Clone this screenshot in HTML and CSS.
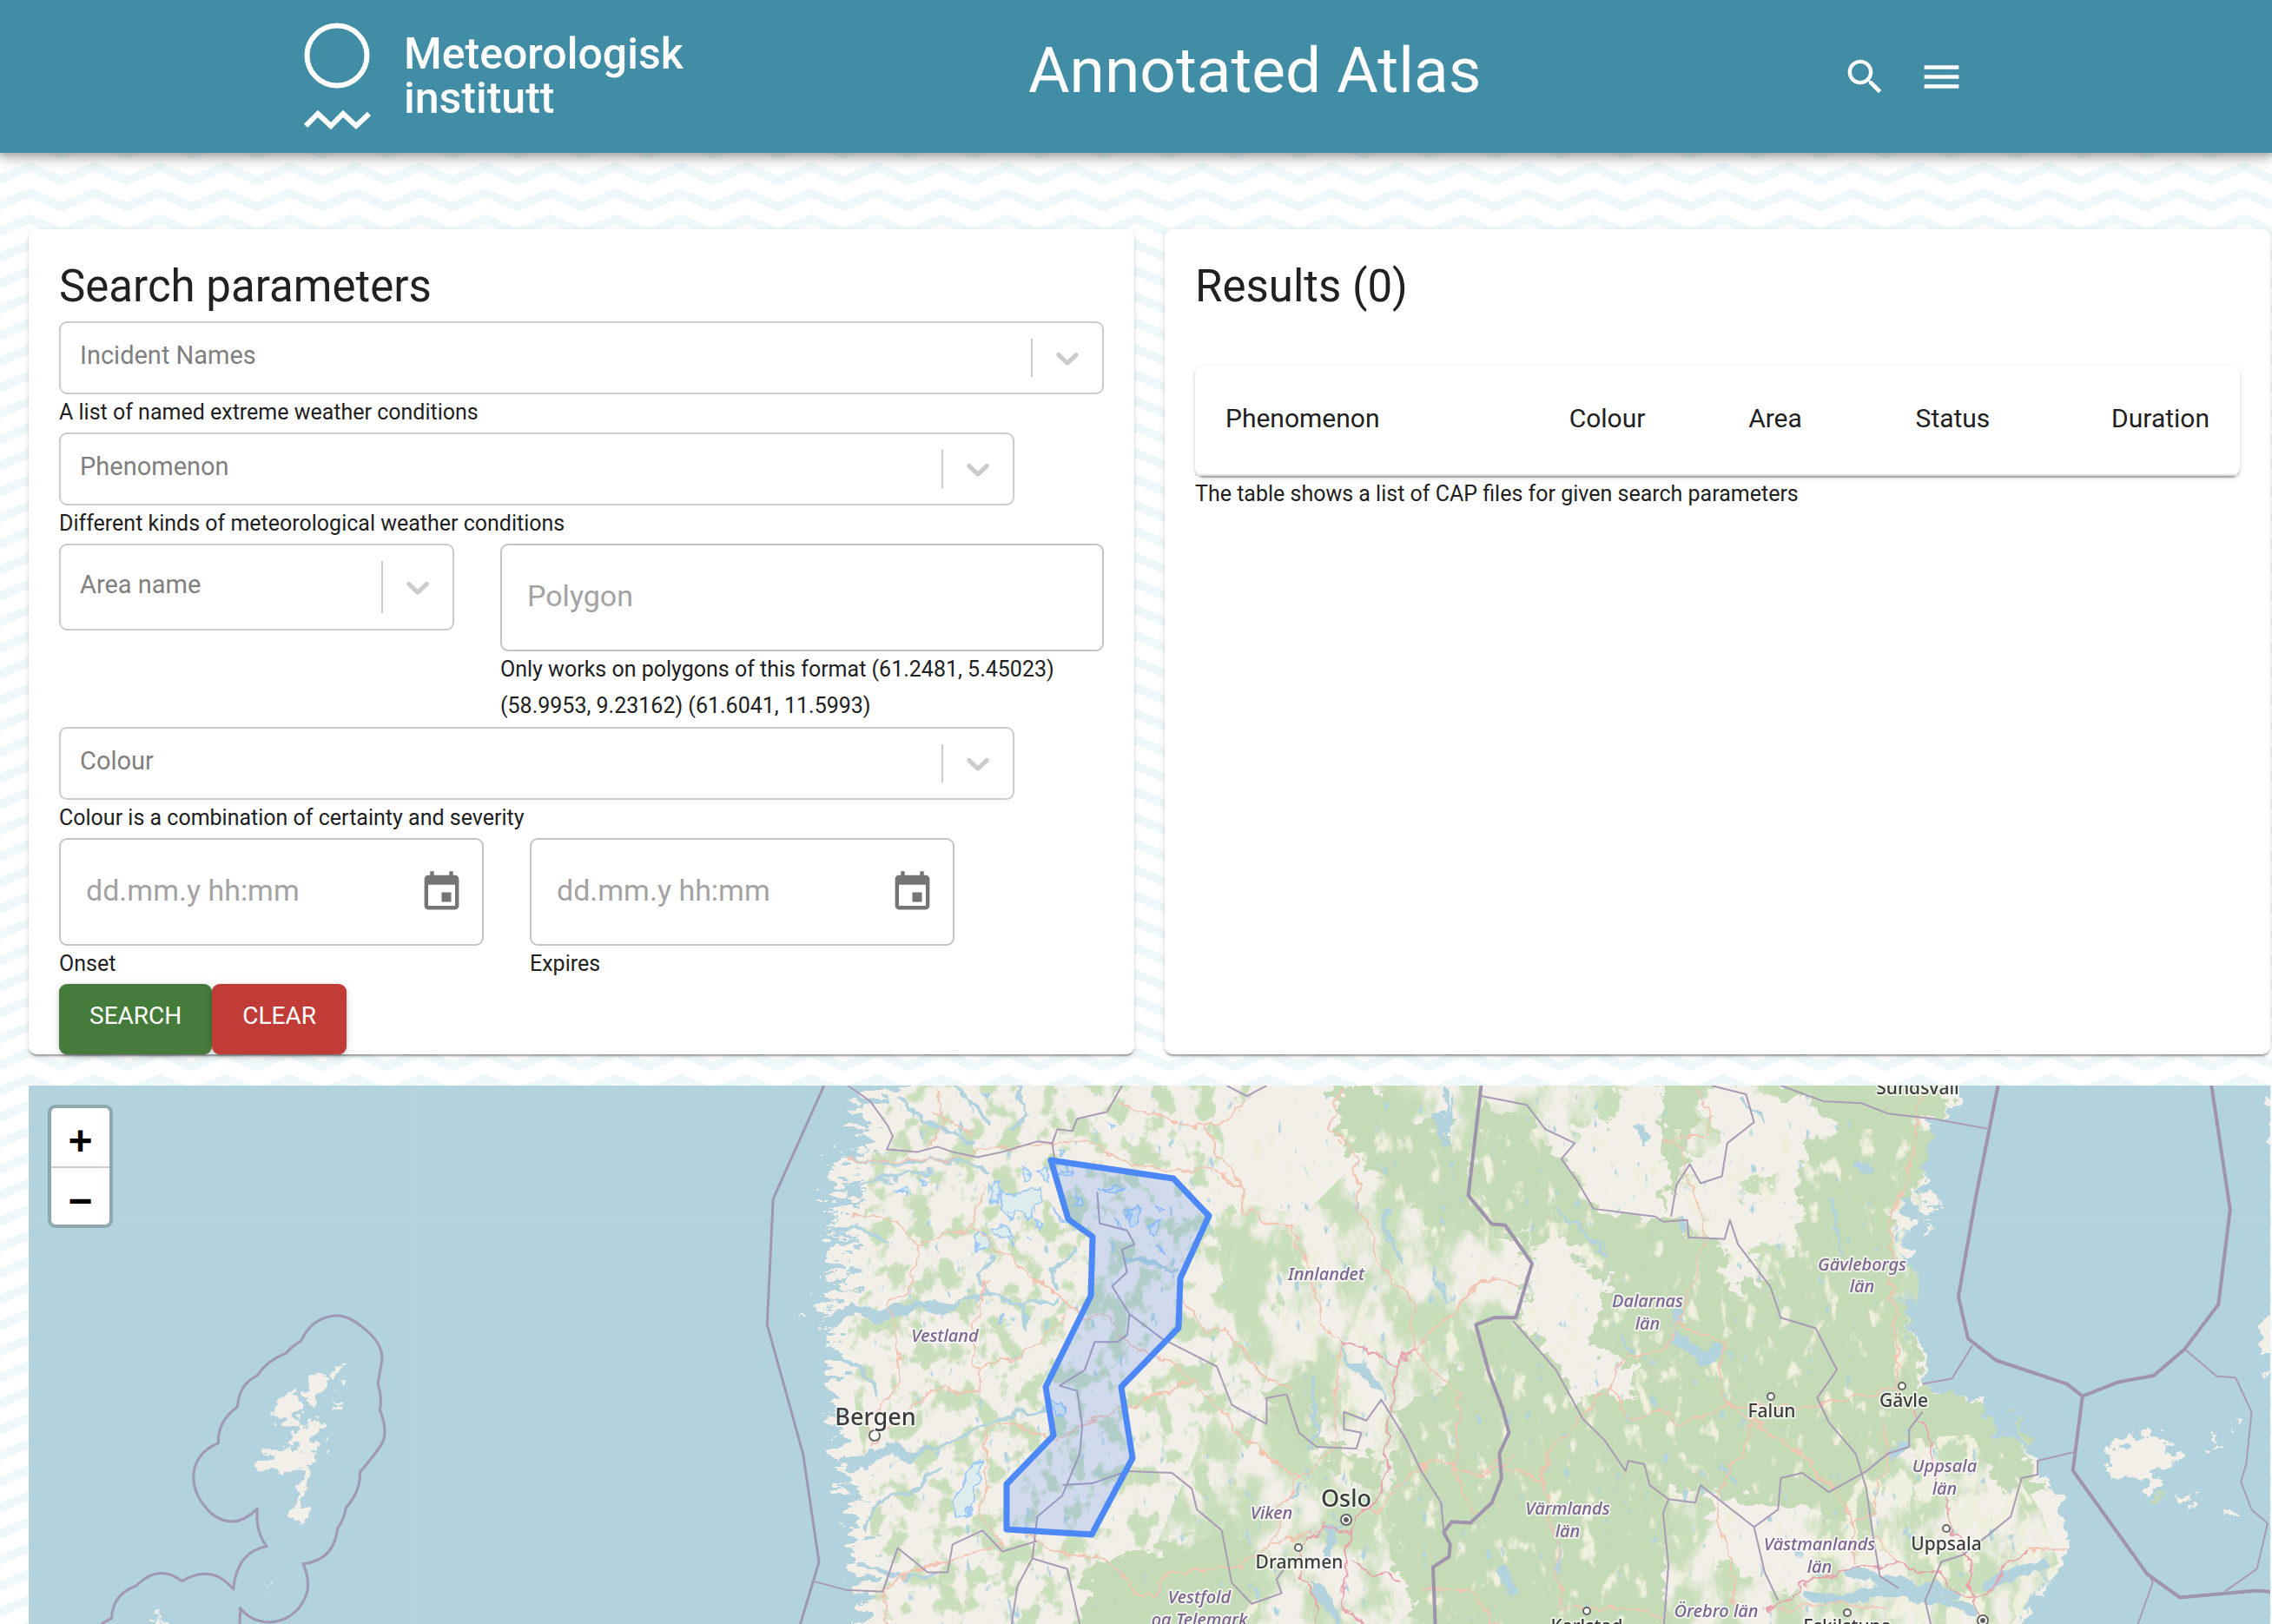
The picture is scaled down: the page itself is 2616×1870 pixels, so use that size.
FILE: index.html
```html
<!DOCTYPE html>
<html lang="en">
<head>
<meta charset="utf-8">
<meta name="viewport" content="width=device-width, initial-scale=1">
<title>Annotated Atlas</title>
<link rel="stylesheet" href="styles.css">
</head>
<body>
<header class="app-bar">
  <a class="logo" href="#" aria-label="Meteorologisk institutt">
    <svg class="logo-mark" viewBox="0 0 78 124" aria-hidden="true">
      <circle cx="38" cy="38" r="34.5"/>
      <path d="M2 119 16 105 31 119 45 105 60 119 75 105"/>
    </svg>
    <span class="logo-text">Meteorologisk<br>institutt</span>
  </a>
  <h1 class="app-title">Annotated Atlas</h1>
  <nav class="app-actions">
    <button class="icon-button" type="button" aria-label="Search">
      <svg viewBox="0 0 24 24"><path d="M15.5 14h-.79l-.28-.27C15.41 12.59 16 11.11 16 9.5 16 5.91 13.09 3 9.5 3S3 5.91 3 9.5 5.91 16 9.5 16c1.61 0 3.09-.59 4.23-1.57l.27.28v.79l5 4.99L20.49 19l-4.99-5zm-6 0C7.01 14 5 11.99 5 9.5S7.01 5 9.5 5 14 7.01 14 9.5 11.99 14 9.5 14z"/></svg>
    </button>
    <button class="icon-button" type="button" aria-label="Menu">
      <svg viewBox="0 0 24 24"><path d="M3 18h18v-2H3v2zm0-5h18v-2H3v2zm0-7v2h18V6H3z"/></svg>
    </button>
  </nav>
</header>

<main class="page">
  <div class="panels">
    <section class="card">
      <h2 class="card-title">Search parameters</h2>
      <form class="search-form">
        <div class="field">
          <div class="select">
            <select id="incident" aria-label="Incident Names"><option>Incident Names</option></select>
            <span class="select-arrow"><svg viewBox="0 0 20 20"><use href="#chevron"/></svg></span>
          </div>
          <label class="help" for="incident">A list of named extreme weather conditions</label>
        </div>
        <div class="field field-short">
          <div class="select">
            <select id="phenomenon" aria-label="Phenomenon"><option>Phenomenon</option></select>
            <span class="select-arrow"><svg viewBox="0 0 20 20"><use href="#chevron"/></svg></span>
          </div>
          <label class="help" for="phenomenon">Different kinds of meteorological weather conditions</label>
        </div>
        <div class="area-row">
          <div class="select select-tall">
            <select aria-label="Area name"><option>Area name</option></select>
            <span class="select-arrow"><svg viewBox="0 0 20 20"><use href="#chevron"/></svg></span>
          </div>
          <div class="field">
            <div class="text-box"><input id="polygon" type="text" placeholder="Polygon"></div>
            <label class="help" for="polygon">Only works on polygons of this format (61.2481, 5.45023) (58.9953, 9.23162) (61.6041, 11.5993)</label>
          </div>
        </div>
        <div class="field field-short">
          <div class="select">
            <select id="colour" aria-label="Colour"><option>Colour</option></select>
            <span class="select-arrow"><svg viewBox="0 0 20 20"><use href="#chevron"/></svg></span>
          </div>
          <label class="help" for="colour">Colour is a combination of certainty and severity</label>
        </div>
        <div class="date-row">
          <div class="field">
            <div class="text-box">
              <input id="onset" type="text" placeholder="dd.mm.y hh:mm">
              <button class="icon-button calendar" type="button" aria-label="Choose onset"><svg viewBox="0 0 24 24"><use href="#event"/></svg></button>
            </div>
            <label class="help" for="onset">Onset</label>
          </div>
          <div class="field">
            <div class="text-box">
              <input id="expires" type="text" placeholder="dd.mm.y hh:mm">
              <button class="icon-button calendar" type="button" aria-label="Choose expiry"><svg viewBox="0 0 24 24"><use href="#event"/></svg></button>
            </div>
            <label class="help" for="expires">Expires</label>
          </div>
        </div>
        <div class="buttons">
          <button class="button button-search" type="submit">SEARCH</button>
          <button class="button button-clear" type="reset">CLEAR</button>
        </div>
      </form>
    </section>

    <section class="card">
      <h2 class="card-title">Results (0)</h2>
      <div class="table-paper">
        <table class="results">
          <thead>
            <tr><th scope="col">Phenomenon</th><th scope="col">Colour</th><th scope="col">Area</th><th scope="col">Status</th><th scope="col">Duration</th></tr>
          </thead>
        </table>
      </div>
      <p class="help">The table shows a list of CAP files for given search parameters</p>
    </section>
  </div>

  <section class="map" aria-label="Map">
    <svg class="map-canvas" viewBox="33 1250 2581 640" preserveAspectRatio="xMinYMin slice">
      <defs>
        <filter id="rough" filterUnits="userSpaceOnUse" x="33" y="1230" width="2600" height="680" color-interpolation-filters="sRGB">
          <feTurbulence type="fractalNoise" baseFrequency=".045 .06" numOctaves="4" seed="4" result="n"/>
          <feDisplacementMap in="SourceGraphic" in2="n" scale="46" xChannelSelector="R" yChannelSelector="G"/>
        </filter>
        <filter id="coast" filterUnits="userSpaceOnUse" x="33" y="1230" width="2600" height="680" color-interpolation-filters="sRGB">
          <feTurbulence type="fractalNoise" baseFrequency=".04 .09" numOctaves="5" seed="15" result="n"/>
          <feDisplacementMap in="SourceGraphic" in2="n" scale="90" xChannelSelector="R" yChannelSelector="G"/>
        </filter>
        <filter id="wobble" filterUnits="userSpaceOnUse" x="33" y="1230" width="2600" height="680" color-interpolation-filters="sRGB">
          <feTurbulence type="fractalNoise" baseFrequency=".05" numOctaves="3" seed="9" result="n"/>
          <feDisplacementMap in="SourceGraphic" in2="n" scale="18" xChannelSelector="R" yChannelSelector="G"/>
        </filter>
        <filter id="sparse-green" filterUnits="userSpaceOnUse" x="33" y="1230" width="2600" height="680" color-interpolation-filters="sRGB">
          <feTurbulence type="fractalNoise" baseFrequency=".04 .035" numOctaves="5" seed="12"/>
          <feColorMatrix values="0 0 0 0 .79  0 0 0 0 .87  0 0 0 0 .73  9 0 0 0 -4.6"/>
          <feComposite in2="SourceAlpha" operator="in"/>
        </filter>
        <filter id="dense-green" filterUnits="userSpaceOnUse" x="33" y="1230" width="2600" height="680" color-interpolation-filters="sRGB">
          <feTurbulence type="fractalNoise" baseFrequency=".022 .014" numOctaves="5" seed="31"/>
          <feColorMatrix values="0 0 0 0 .79  0 0 0 0 .87  0 0 0 0 .73  6 0 0 0 -2.5"/>
          <feComposite in2="SourceAlpha" operator="in"/>
        </filter>
        <filter id="fields" filterUnits="userSpaceOnUse" x="33" y="1230" width="2600" height="680" color-interpolation-filters="sRGB">
          <feTurbulence type="fractalNoise" baseFrequency=".05 .03" numOctaves="4" seed="7"/>
          <feColorMatrix values="0 0 0 0 .94  0 0 0 0 .94  0 0 0 0 .87  0 9 0 0 -4.7"/>
          <feComposite in2="SourceAlpha" operator="in"/>
        </filter>
        <filter id="clearings" filterUnits="userSpaceOnUse" x="33" y="1230" width="2600" height="680" color-interpolation-filters="sRGB">
          <feTurbulence type="fractalNoise" baseFrequency=".05 .03" numOctaves="4" seed="17"/>
          <feColorMatrix values="0 0 0 0 .94  0 0 0 0 .94  0 0 0 0 .87  0 7 0 0 -4.3"/>
          <feComposite in2="SourceAlpha" operator="in"/>
        </filter>
        <filter id="lakes" filterUnits="userSpaceOnUse" x="33" y="1230" width="2600" height="680" color-interpolation-filters="sRGB">
          <feTurbulence type="fractalNoise" baseFrequency=".09 .045" numOctaves="3" seed="21"/>
          <feColorMatrix values="0 0 0 0 .7  0 0 0 0 .83  0 0 0 0 .87  0 0 10 0 -7.2"/>
          <feComposite in2="SourceAlpha" operator="in"/>
        </filter>
      </defs>
      <rect class="sea" x="33" y="1230" width="2600" height="680"/>
      <path class="tile-seam" d="M474 1250V1890M33 1401H2614"/>

      <!-- land -->
      <g filter="url(#coast)">
        <g transform="translate(846 1240) scale(.574 .4018)">
          <path class="land" d="M335-60 315 40 240 90 255 140 290 190 230 190 235 220 195 260 205 290 245 310 190 370 225 400 180 430 235 460 215 500 170 560 240 570 195 620 160 690 215 690 185 730 195 790 195 850 200 900 195 950 210 1010 215 1080 230 1130 235 1220 250 1280 240 1330 255 1380 250 1440 265 1500 250 1700H900V-60z"/>
        </g>
      </g>
      <g filter="url(#rough)">
        <g transform="translate(1650 1240) scale(.616 .4018)">
          <path class="land" d="M-900-40H990L975 90 935 120 925 180 915 260 915 310 935 350 925 395 885 340 870 350 885 400 880 480 890 560 880 640 885 700 898 770 910 850 915 890 950 895 965 940 1015 920 1030 970 1065 1030 1110 1080 1140 1130 1160 1200 1175 1260 1200 1310 1195 1360 1155 1400 1130 1440 1160 1450 1105 1500 1080 1700H-900z"/>
          <path class="land" d="M1310 1010 1350 1020 1385 1050 1390 1110 1360 1140 1330 1180 1300 1160 1270 1140 1260 1080 1295 1060zM1460 1050 1475 1040 1470 1085zM1390 1200 1440 1190 1410 1230zM1490 1240 1505 1255 1488 1270zM1565 700 1540 760 1575 850 1600 700zM1570 60 1562 180 1600 200 1600 40zM1500 970 1510 1000 1498 1010zM905 425 935 435 925 445z"/>
          <path class="green" d="M1080 960 1100 1010 1115 1070 1085 1040zM1350 1180 1380 1200 1350 1215z"/>
        </g>
        <g transform="translate(0 1450) scale(.574 .3333)">
          <path class="land" d="M675 335 692 345 688 370 680 432 662 425zM634 402 654 410 644 460 646 548 626 535 618 460zM664 460 692 480 680 502zM582 470 598 465 592 580 576 575 578 555 545 545 560 515zM610 550 640 590 635 660 625 690 626 760 615 770 612 850 602 928 588 905 600 800 604 710 580 735 570 752 535 700 532 660 580 655 590 590zM660 615 660 640 650 640zM325 1210 320 1245 300 1250zM405 1210 402 1235zM543 1110 545 1130 540 1132z"/>
        </g>
      </g>

      <!-- vegetation -->
      <path class="veg-sparse" d="M1035 1250 1010 1300 1000 1350 990 1450 975 1520 985 1620 1000 1720 1010 1890H1460L1430 1700 1480 1500 1400 1350 1440 1250z"/>
      <path class="veg-dense" d="M1280 1890 1340 1760 1390 1640 1430 1560 1400 1440 1410 1380 1500 1400 1570 1330 1540 1250H2190L2215 1300 2205 1600 2290 1650 2350 1740 2370 1800 2300 1890z"/>
      <g filter="url(#rough)">
        <g transform="translate(850 1240) scale(.574 .4018)">
          <path class="green" d="M1150 820 1200 900 1160 980 1190 1060 1280 1080 1290 1180 1240 1180 1180 1100 1100 1020 1060 900zM1330 960 1420 880 1480 720 1600 700V1700H1400L1330 1450 1300 1300 1320 1100zM700 1400 900 1330 1010 1280 1040 1500 1000 1700H680zM1190 30 1300 30 1460 200 1470 350 1560 460 1420 440 1300 300 1210 200z"/>
        </g>
        <g transform="translate(1650 1240) scale(.616 .4018)">
          <path class="green" d="M90 60 180 130 250 250 290 380 440 410 500 460 545 480 540 600 610 600 680 480 690 200 760 150 700 60 900 120 930 170 910 300 850 400 880 640 900 880 1010 930 1100 1080 1150 1180 1080 1200 1000 1060 900 1060 830 1140 820 1300 700 1250 600 1220 520 1180 430 1200 440 1700H60L20 1400 120 1200 140 1000 90 780 80 710 150 690 190 540 130 420 70 340z"/>
          <path class="green" d="M600-20 980-20 960 90 920 120 760 100 650 30zM430-20 510-20 500 60 470 240 432 400z"/>
          <path class="land" d="M365 25H430V400L300 378 280 300 240 230 275 140 330 115zM520 10 700 60 750 120 740 170 690 180 680 270 590 300 560 350 640 320 680 350 670 470 600 490 610 590 570 620 540 600 545 470 510 450 490 350 470 250 540 200 500 60zM130 400 200 470 250 450 290 550 330 580 300 700 305 790 370 800 365 930 330 880 290 930 240 860 160 700 200 480zM520 1190 600 1220 650 1240 690 1300 720 1400 660 1500 600 1420 520 1390z"/>
        </g>
      </g>
      <path class="veg-fields" d="M2080 1890 2090 1740 2150 1700 2160 1660 2290 1650 2360 1760 2370 1810 2300 1890z"/>
      <path class="veg-clearings" d="M1420 1890 1500 1700 1470 1500 1400 1300H2200L2200 1600 2150 1700 2080 1890z"/>
      <path class="veg-lakes" d="M1030 1260H2180L2200 1600 2280 1650 2350 1760 2350 1890H1040L1000 1700 1000 1500 1020 1350z"/>

      <!-- fjords and lakes -->
      <g filter="url(#wobble)">
        <g class="water-lines" transform="translate(850 1240) scale(.574 .4018)">
          <path class="w3" d="M190 700 230 650 280 690 360 655 430 660 500 620 560 655 640 640M500 620 490 570 510 510M570 650 580 730M640 610 630 560 680 490M220 235 320 250 420 235 500 265M240 310 310 290 380 270M320 60 380 130 470 190M560 30 580 110 555 150M430 30 480 80 500 130M230 1120 300 1060 340 1090 400 1060 500 1000 560 960 620 950M250 1300 290 1210 360 1180 400 1120M240 1400 330 1440 400 1420M180 780 240 830 280 900M190 430 250 440 300 470"/>
          <path class="w3" d="M1210 770 1230 830 1280 880 1290 920M1220 1260 1190 1320 1180 1400M1150 1450 1190 1510 1200 1600M1150 850 1160 990 1155 1060M1405 130 1420 200M1430 60 1425 150M1105 1210 1130 1170M1300 380 1305 450 1330 530M540 1500 560 1600M780 525 880 550"/>
          <path class="w6" d="M190 700 230 660 280 690 360 655 420 660M230 1120 300 1065 340 1090M1240 830 1280 880M1190 1300 1185 1350M1405 110 1412 150M1160 1470 1195 1540"/>
        </g>
        <g class="water-lines" transform="translate(1650 1240) scale(.616 .4018)">
          <path class="w3" d="M230 380 280 440 320 510M750 350 760 500M0 550 30 640M20 30 30 200M230 1330 240 1420M580 60 620 130M360 740 375 790M540 1110 560 1160"/>
          <path class="w6" d="M455 740 500 800 540 780 500 820M790 250 815 270M385 140 400 180M880 1050 860 1080M130 1420 150 1470M700 1480 760 1500 830 1470 920 1490 1010 1530M780 1420 860 1450 980 1480M1040 1450 1140 1400M455 680 460 700"/>
        </g>
      </g>
      <g filter="url(#wobble)">
        <g class="glacier" transform="translate(850 1240) scale(.574 .4018)">
          <path d="M555 330 600 310 610 360 580 400 560 380 540 400 520 340zM510 430 540 420 550 460 520 460zM470 460 495 450 500 490 480 500zM470 1110 485 1100 475 1180 470 1240 440 1260 430 1220zM630 930 655 940 650 970 630 970zM320 320 340 320 335 340zM365 290 375 300 368 315zM515 300 525 310 520 370 508 350zM590 400 605 420 600 440zM545 460 552 490zM780 380 800 375 805 410 790 425zM820 420 845 410 840 450 822 445zM760 400 770 440 755 430zM720 320 770 320 760 335zM835 365 850 375 840 385zM680 340 690 370 675 375zM640 270 675 265 670 285zM845 480 855 510 848 505zM525 690 532 705 524 708zM570 260 590 290 575 300zM600 280 625 260 620 300zM640 390 650 415 640 412zM580 450 590 470zM490 50 502 48 500 60zM745 135 760 140 750 150zM640 215 655 220 645 230z"/>
        </g>
      </g>

      <!-- roads -->
      <g filter="url(#wobble)" class="roads">
        <path transform="translate(850 1240) scale(.574 .4018)" d="M220 240 400 240 500 210 640 185 720 190 760 240 860 270 940 265 1010 320 1015 370 1050 410 1110 430 1140 540M400 40 410 130 390 200M390 100 470 165M760 70 850 120 940 150 1010 90 1030 50M940 150 970 240 1010 320M230 400 320 410 360 480 350 600 300 650 325 790 320 890 260 980 270 1060M360 480 470 430 560 540 650 640 690 690 740 680 780 770 850 800 910 870 1000 1010 1060 1090 1130 1140M470 430 490 310M500 580 470 720 480 900 390 900 270 1050M480 830 590 780 660 690M910 870 830 920 740 970 640 1040 540 990 500 1020 490 1260 530 1340 520 1380M890 640 940 730 980 730 1060 870 1110 890M1210 30 1190 150 1240 230 1240 380 1270 440 1280 520 1350 640 1355 780M1140 540 1165 640 1170 710 1210 760 1200 900 1195 1070 1130 1140 1090 1230 1070 1340 1170 1300M1355 780 1400 850 1445 910 1440 1140 1480 1260M1385 1100 1500 1145 1560 1080M1270 1250 1385 1100M1355 780 1420 690 1490 580 1568 595M300 1600 290 1470 380 1400 530 1340M560 1310 660 1360 730 1380 830 1500 860 1415 1000 1410 1070 1340M1370 1470 1470 1470 1540 1600"/>
        <path transform="translate(1650 1240) scale(.616 .4018)" d="M490 30 525 120 510 170 430 175 465 200 475 300 500 370 508 470 480 600 460 710 430 780 350 810 330 900 370 980 430 950 455 1000 550 945 600 985 650 1050 690 1080 740 1170 780 1260 790 1290M460 710 550 770 535 850 550 945 720 945 870 890M915 30 910 130 885 290 855 380 860 640 865 760 870 890 900 970M600 985 580 1080 530 1190 535 1310 565 1430 560 1520M330 890 270 980 215 1070 205 1160 230 1330 240 1520 390 1520 430 1560M0 1100 90 1145 120 1100 205 1160M850 980 845 1100 825 1250 790 1280 785 1400M825 1310 870 1400M650 1530 740 1510 850 1520M1110 1350 1190 1360"/>
        <path class="motorway" transform="translate(850 1240) scale(.574 .4018)" d="M1210 760 1270 790 1315 830 1320 920 1300 980 1305 1060 1290 1180 1270 1230 1235 1260 1230 1310 1180 1290 1125 1350 1130 1440 1160 1500 1150 1600M1315 830 1355 775M1235 1300 1215 1400 1215 1520 1280 1600M1230 1380 1270 1420 1330 1440"/>
        <path class="motorway" transform="translate(1650 1240) scale(.616 .4018)" d="M900 960 930 1020 940 1150 960 1220 970 1300 1000 1370 1005 1500 1025 1550M630 1530 670 1500 690 1450 780 1410 870 1395 940 1420 1000 1490 1040 1480 1070 1400 1110 1350"/>
      </g>

      <!-- county and national borders -->
      <g class="borders">
        <path transform="translate(850 1240) scale(.574 .4018)" d="M220 25 265 70 300 140 310 170 298 208 360 215 400 200 430 215 480 230 530 215 600 185 630 190 640 150 670 155 680 120 740 100 770 25M630 190 635 240M720 330 725 420 780 440 795 480 770 495 780 560 750 600 785 680 780 740 760 760 715 760 695 840 645 885 680 900 690 1000 685 1080 650 1200 600 1260 590 1380M785 680 850 750 960 830 990 940 1060 995 1060 920 1100 910 1125 1020 1160 1060 1240 1065 1250 1020 1215 1010 1215 960 1260 985 1290 925 1340 1040 1370 1130 1410 1220 1415 1300M650 1170 710 1165 780 1130 870 1135 910 1180 920 1240 970 1300 990 1450 1030 1510 1090 1480 1080 1440 1100 1400M150 1445 215 1470 290 1475 320 1350 380 1420 420 1420 430 1340 490 1300 530 1360 600 1330M590 1380 660 1410 690 1600M590 1380 560 1460 545 1600M980 25 1020 55 1060 25"/>
        <path transform="translate(1650 1240) scale(.616 .4018)" d="M90 55 175 80 210 150 265 190 240 235 270 300 300 378 415 400 430 415 475 410 478 460 545 465 555 410 570 480 630 600 650 690 715 720 755 840 718 920 740 990 790 1080 810 1180 820 1290 835 1430 870 1465M445 400 455 310 480 250 500 305 540 285 550 190 600 130 585 50 520 25M650 25 730 70 800 75 850 105 935 120 1035 148M150 700 230 840 280 980 320 1040 360 1130 365 1100 395 1110 405 1170 440 1210 490 1220 500 1170 600 1290 620 1420 645 1500M440 1210 430 1250 440 1400 430 1600M600 1290 645 1240 650 1150 690 1135 740 1190 810 1130 850 1080 890 1060 890 1010 915 960M915 880 970 865 1008 770M1198 1075 1130 1100 1130 1140 1100 1150 1080 1260 1040 1310 990 1370 950 1390 920 1500 935 1600M1405 780 1465 858 1500 862 1530 960 1520 1110 1510 1160 1530 1240 1560 1280 1540 1410 1480 1475M1340 1425 1345 1450 1310 1600"/>
        <g class="coastal">
          <path transform="translate(850 1240) scale(.574 .4018)" d="M172 25 70 350 58 710 130 1080 162 1390 118 1600"/>
          <path transform="translate(0 1450) scale(.574 .3333)" d="M203 1260 224 1240Q225 1160 273 1128 318 1050 365 1112 425 1050 468 1140 475 1010 535 992 512 940 516 862 470 940 425 880 388 820 388 750 390 670 438 635 436 560 476 510 480 430 516 402 535 350 573 325 590 295 604 282 625 200 675 194 700 195 725 232 770 290 766 350L758 430Q767 480 762 520 780 600 765 640 750 680 722 735 724 800 694 858 690 900 677 930 670 1040 608 1052 625 1120 612 1170 590 1250 540 1254 500 1250 482 1204L480 1290"/>
        </g>
        <g class="national">
          <path transform="translate(1650 1240) scale(.616 .4018)" d="M90 25 66 340 110 422 135 425 185 535 155 690 115 690 80 710 105 850 130 950 142 1020 124 1080 128 1150 110 1220 70 1278 35 1275 20 1305 32 1340 30 1375 0 1405 5 1600"/>
          <path transform="translate(1650 1240) scale(.616 .4018)" d="M1056 25 1014 350 982 630 1000 750 1052 812 1185 880 1214 915 1280 875 1347 856 1405 780 1468 652 1490 380 1455 25M1214 915 1196 1128 1335 1425 1396 1492 1540 1472 1568 1476"/>
        </g>
      </g>

      <path class="warning-area" d="M1210 1336 1351 1357 1392 1400 1359 1472 1357 1529 1291 1597 1304 1679 1257 1767 1159 1761V1709L1213 1653 1204 1597 1256 1492 1258 1424 1230 1404z"/>

      <g class="place-dots">
        <circle cx="1007" cy="1653" r="6"/><circle cx="1495" cy="1782" r="4"/><circle cx="2190" cy="1596" r="4"/><circle cx="2039" cy="1608" r="4"/><circle cx="2241" cy="1760" r="4"/><circle cx="1827" cy="1855" r="4"/><circle cx="2127" cy="1857" r="4"/><circle cx="1550" cy="1750" r="6"/><circle cx="2283" cy="1866" r="6"/>
        <circle class="capital" cx="1550" cy="1750" r="2"/><circle class="capital" cx="2283" cy="1866" r="2"/>
      </g>
      <g class="region">
        <text x="1088" y="1545">Vestland</text>
        <text x="1527" y="1474">Innlandet</text>
        <text x="1464" y="1749">Viken</text>
        <text x="1381" y="1846">Vestfold</text>
        <text x="1381" y="1872">og Telemark</text>
        <text x="2144" y="1463">Gävleborgs</text><text x="2144" y="1488">län</text>
        <text x="1897" y="1505">Dalarnas</text><text x="1897" y="1531">län</text>
        <text x="2239" y="1695">Uppsala</text><text x="2239" y="1721">län</text>
        <text x="1805" y="1744">Värmlands</text><text x="1805" y="1770">län</text>
        <text x="2095" y="1785">Västmanlands</text><text x="2095" y="1811">län</text>
        <text x="1976" y="1862">Örebro län</text>
      </g>
      <g class="city">
        <text class="major" x="1008" y="1641">Bergen</text>
        <text class="major" x="1550" y="1735">Oslo</text>
        <text x="1496" y="1806">Drammen</text>
        <text x="2208" y="1260">Sundsvall</text>
        <text x="2192" y="1620">Gävle</text>
        <text x="2040" y="1632">Falun</text>
        <text x="2241" y="1785">Uppsala</text>
        <text x="1827" y="1880">Karlstad</text>
        <text x="2127" y="1880">Eskilstuna</text>
      </g>
    </svg>
    <div class="zoom-control">
      <button type="button" aria-label="Zoom in">+</button>
      <button type="button" aria-label="Zoom out">−</button>
    </div>
  </section>
</main>

<svg class="symbols" aria-hidden="true">
  <symbol id="chevron" viewBox="0 0 20 20"><path d="M4.516 7.548c0.436-0.446 1.043-0.481 1.576 0l3.908 3.747 3.908-3.747c0.533-0.481 1.141-0.446 1.574 0 0.436 0.445 0.408 1.197 0 1.615-0.406 0.418-4.695 4.502-4.695 4.502-0.217 0.223-0.502 0.335-0.787 0.335s-0.57-0.112-0.789-0.335c0 0-4.287-4.084-4.695-4.502s-0.436-1.17 0-1.615z"/></symbol>
  <symbol id="event" viewBox="0 0 24 24"><path d="M17 12h-5v5h5v-5zM16 1v2H8V1H6v2H5c-1.11 0-1.99.9-1.99 2L3 19c0 1.1.89 2 2 2h14c1.1 0 2-.9 2-2V5c0-1.1-.9-2-2-2h-1V1h-2zm3 18H5V8h14v11z"/></symbol>
</svg>
</body>
</html>
```
FILE: styles.css
```css
*, *::before, *::after { box-sizing: border-box; }

body {
  margin: 0;
  min-height: 100vh;
  display: flex;
  flex-direction: column;
  font-family: Roboto, "Liberation Sans", sans-serif;
  color: #212121;
  background: #fff url("data:image/svg+xml,%3Csvg xmlns='http://www.w3.org/2000/svg' viewBox='0 0 75 30' preserveAspectRatio='none'%3E%3Cpath d='M-38 21 0 5 37 21 75 5 113 21M-38-9 0-25 37-9 75-25 113-9M-38 51 0 35 37 51 75 35 113 51' fill='none' stroke='%23eef7f9' stroke-width='10'/%3E%3C/svg%3E") 34px 7px / 75px 30px;
}

h1, h2, p { margin: 0; font-weight: 400; }
button, input, select { font: inherit; color: inherit; }
button { padding: 0; border: 0; background: none; cursor: pointer; }
.symbols { display: none; }

/* Header */
.app-bar {
  position: relative;
  z-index: 1;
  display: flex;
  align-items: center;
  height: 176px;
  padding: 0 354px 0 350px;
  color: #fff;
  background: #418da6;
  box-shadow: 0 4px 9px -2px rgba(0, 0, 0, .2), 0 9px 11px rgba(0, 0, 0, .14), 0 2px 22px rgba(0, 0, 0, .12);
}
.logo {
  flex: 0 0 834px;
  display: flex;
  align-items: center;
  gap: 37px;
  color: inherit;
  text-decoration: none;
}
.logo-mark { width: 78px; height: 124px; fill: none; stroke: #fff; stroke-width: 6; }
.logo-text { font-size: 50px; font-weight: 500; line-height: 51px; }
.app-title { font-size: 73px; line-height: 90px; padding-bottom: 14px; }
.app-actions { display: flex; gap: 35px; margin-left: auto; }
.icon-button { width: 53px; height: 53px; flex: none; }
.icon-button svg { display: block; width: 53px; height: 53px; fill: currentColor; }

/* Page */
.page {
  flex: 1;
  display: flex;
  flex-direction: column;
  gap: 36px;
  padding: 88px 2px 0 33px;
}
.panels { display: grid; grid-template-columns: 1fr 1fr; gap: 35px; }
.card {
  padding: 35px 35px 0;
  border-radius: 9px;
  background: #fff;
  box-shadow: 0 4px 2px -2px rgba(0, 0, 0, .2), 0 2px 2px rgba(0, 0, 0, .14), 0 2px 7px rgba(0, 0, 0, .12);
}
.card-title { font-size: 51px; line-height: 61px; padding-bottom: 10px; }
.help { display: block; font-size: 25px; line-height: 42px; padding-bottom: 2px; }

/* Form */
.field-short { width: 91.4%; }
.select {
  display: flex;
  height: 84px;
  border: 2px solid #ccc;
  border-radius: 9px;
  background: #fff;
}
.select-tall { height: 100px; }
.select select {
  flex: 1;
  min-width: 0;
  padding: 0 0 6px 22px;
  border: 0;
  appearance: none;
  background: none;
  font-size: 29px;
  color: #808080;
}
.select-arrow {
  display: flex;
  align-items: center;
  margin: 18px 0;
  padding: 0 18px;
  border-left: 2px solid #ccc;
}
.select-arrow svg { width: 44px; height: 44px; fill: #ccc; }
.area-row {
  display: grid;
  grid-template-columns: 455fr 695fr;
  gap: 53px;
  align-items: start;
  padding-bottom: 1px;
}
.date-row {
  display: grid;
  grid-template-columns: repeat(2, minmax(0, 1fr));
  gap: 53px;
  width: 85.7%;
}
.text-box {
  display: flex;
  align-items: center;
  height: 124px;
  padding: 0 20px 0 29px;
  border: 2px solid #c4c4c4;
  border-radius: 9px;
}
.text-box input {
  flex: 1;
  min-width: 0;
  padding: 0 0 4px;
  border: 0;
  outline: 0;
  background: none;
  font-size: 34px;
}
.text-box input::placeholder { color: #a3a3a3; opacity: 1; }
.calendar { color: #757575; }
.buttons { display: flex; }
.button {
  height: 81px;
  padding: 0 35px 8px;
  border-radius: 9px;
  font-size: 28px;
  color: #fff;
  box-shadow: 0 4px 2px -3px rgba(0, 0, 0, .2), 0 2px 4px rgba(0, 0, 0, .14), 0 2px 11px rgba(0, 0, 0, .12);
}
.button-search { background: #467c3b; }
.button-clear { background: #c13c37; }

/* Results */
.table-paper {
  margin-top: 52px;
  border-radius: 9px;
  background: #fff;
  box-shadow: 0 4px 2px -2px rgba(0, 0, 0, .2), 0 2px 2px rgba(0, 0, 0, .14), 0 2px 7px rgba(0, 0, 0, .12);
}
.results { width: 100%; border-collapse: collapse; table-layout: fixed; }
.results th {
  height: 125px;
  padding: 0 35px 6px;
  border-bottom: 2px solid #e0e0e0;
  font-size: 30px;
  font-weight: 400;
  text-align: right;
}
.results th:nth-child(1) { width: 25%; text-align: left; }
.results th:nth-child(2) { width: 21%; }
.results th:nth-child(3) { width: 15%; }
.results th:nth-child(4) { width: 18%; }
.results th:nth-child(5) { width: 21%; }

/* Map */
.map { position: relative; flex: 1; min-height: 620px; overflow: hidden; background: #b2d2dd; }
.map-canvas { position: absolute; inset: 0; width: 100%; height: 100%; }
.zoom-control {
  position: absolute;
  top: 22px;
  left: 22px;
  width: 75px;
  border: 4px solid rgba(0, 0, 0, .2);
  border-radius: 9px;
  background: #fff;
  background-clip: padding-box;
}
.zoom-control button {
  display: block;
  width: 100%;
  height: 67px;
  padding-top: 9px;
  font: bold 48px/58px "Liberation Sans", Arial, sans-serif;
  color: #000;
}
.zoom-control button + button { border-top: 2px solid #ccc; }

.map-canvas path { vector-effect: non-scaling-stroke; }
.sea { fill: #b2d2dd; }
.tile-seam { fill: none; stroke: #bdd5de; stroke-width: 1; }
.land { fill: #f2efe9; }
.green { fill: #c5dab6; }
.veg-sparse { filter: url(#sparse-green); }
.veg-dense { filter: url(#dense-green); }
.veg-fields { filter: url(#fields); }
.veg-clearings { filter: url(#clearings); }
.veg-lakes { filter: url(#lakes); }
.water-lines { fill: none; stroke: #b2d2dd; stroke-linecap: round; }
.w3 { stroke-width: 4; }
.w6 { stroke-width: 12; }
.glacier { fill: #ddecec; stroke: #9cc7f7; stroke-width: 2; }
.roads { fill: none; stroke: #f2c3b0; stroke-width: 2; }
.motorway { stroke: #e8a0ab; }
.borders { fill: none; stroke: #a99bb5; stroke-width: 2; stroke-linejoin: round; }
.coastal { stroke: #9f97b3; stroke-width: 3; }
.national { stroke: #9f93ae; stroke-width: 4; }
.warning-area { fill: #4c88f8; fill-opacity: .2; stroke: #4c88f8; stroke-width: 7; stroke-linejoin: round; }
.place-dots { fill: #fff; stroke: #666; stroke-width: 2; }
.capital { fill: #444; }
.map-canvas text {
  font-family: "Noto Sans", sans-serif;
  text-anchor: middle;
  paint-order: stroke;
  stroke: rgba(255, 255, 255, .65);
  stroke-width: 4;
  stroke-linejoin: round;
}
.region { font-size: 20px; font-style: italic; font-weight: 500; fill: #7d6390; }
.city { font-size: 21px; font-weight: 500; fill: #3c3c3c; }
.major { font-size: 27px; }
```
